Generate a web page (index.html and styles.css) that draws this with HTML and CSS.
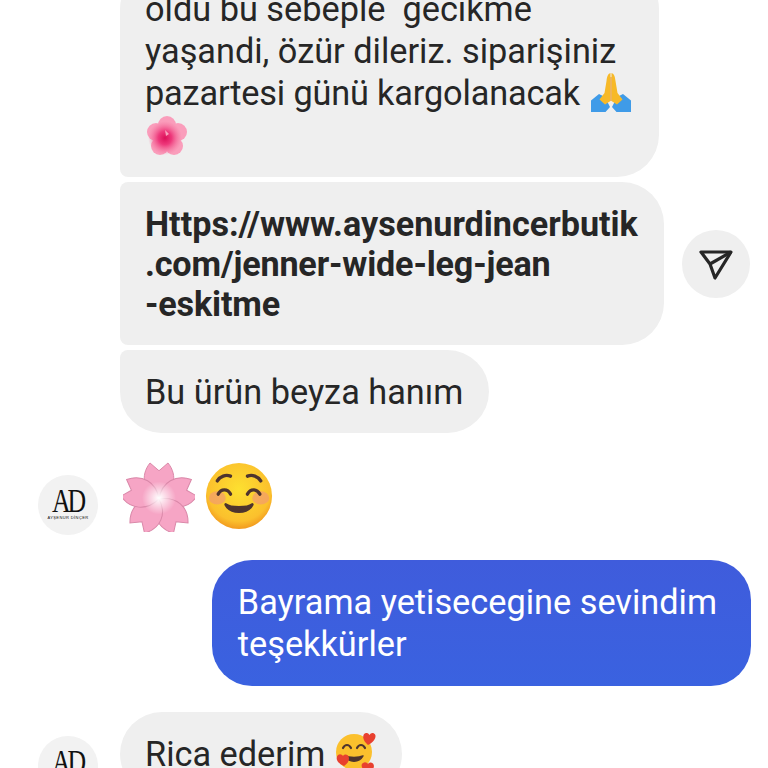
FILE: index.html
```html
<!DOCTYPE html>
<html lang="tr">
<head>
    <meta charset="UTF-8">
    <meta name="viewport" content="width=device-width, initial-scale=1.0">
    <title>Mesajlar</title>
    <link rel="stylesheet" href="styles.css">
</head>
<body>
    <div class="thread">
        <div class="row indent">
            <div class="bubble first">
                oldu bu sebeple&nbsp; gecikme<br>
                yaşandi, özür dileriz. siparişiniz<br>
                <span class="tight">pazartesi günü kargolanacak</span>
                <svg class="emoji pray" viewBox="0 0 40 40" role="img" aria-label="🙏">
                    <path fill="#3f9be8" d="M0 39V27.500L8 21 14 24 19 34 14.500 39ZM40 39V27.500L32 21 26 24 21 34 25.500 39Z"/>
                    <path fill="#f7b928" d="M19.500 0C16.500 1 16 4 15.500 8L13.500 20 8.500 26.500 14 31.500 19.500 28ZM20.500 0C23.500 1 24 4 24.500 8L26.500 20 31.500 26.500 26 31.500 20.500 28Z"/>
                    <path fill="#e9942a" d="M19.500 4H20.500V28H19.500Z"/>
                </svg><br>
                <svg class="emoji flower" viewBox="0 0 40 40" role="img" aria-label="🌺">
                    <defs>
                        <radialGradient id="bloom">
                            <stop offset="0" stop-color="#dc1059"/>
                            <stop offset="0.4" stop-color="#ee3a7c"/>
                            <stop offset="1" stop-color="#f4709c" stop-opacity="0"/>
                        </radialGradient>
                    </defs>
                    <g fill="#fa9dbb">
                        <circle cx="20" cy="9" r="9"/>
                        <circle cx="31" cy="16" r="9"/>
                        <circle cx="27" cy="30" r="9"/>
                        <circle cx="13" cy="30" r="9"/>
                        <circle cx="9" cy="16" r="9"/>
                    </g>
                    <circle cx="18" cy="22" r="17" fill="url(#bloom)"/>
                    <path d="M18 14 22 18 19 20Z" fill="#f8a3bd"/>
                </svg>
            </div>
        </div>

        <div class="row indent center">
            <div class="bubble link">
                Https://www.aysenurdincerbutik<br>
                <span class="tight">.com/jenner-wide-leg-jean</span><br>
                <span class="tight">-eskitme</span>
            </div>
            <button class="share" aria-label="Gönder">
                <svg viewBox="0 0 36 32" width="36" height="32" fill="none" stroke="#262626" stroke-width="3.200" stroke-linejoin="round">
                    <path d="M3 3H33L17 29 12 15Z"/>
                    <path d="M12 15 33 3"/>
                </svg>
            </button>
        </div>

        <div class="row indent">
            <div class="bubble last">Bu ürün beyza hanım</div>
        </div>

        <div class="row with-avatar emoji-row">
            <div class="avatar">
                <span class="mark">AD</span>
                <span class="mark-name">AYŞENUR DİNÇER</span>
            </div>
            <div class="big-emoji">
                <svg class="blossom" viewBox="0 0 72 72" preserveAspectRatio="none" role="img" aria-label="🌸">
                    <defs>
                        <radialGradient id="shine">
                            <stop offset="0" stop-color="#fff"/>
                            <stop offset="1" stop-color="#fff" stop-opacity="0"/>
                        </radialGradient>
                        <path id="petal" d="M36 38C20 30 17 14 27 1L36 9 45 1C55 14 52 30 36 38Z"/>
                    </defs>
                    <g fill="#f6a5c5" stroke="#d987a8" stroke-width="1">
                        <use href="#petal"/>
                        <use href="#petal" transform="rotate(72 36 38)"/>
                        <use href="#petal" transform="rotate(144 36 38)"/>
                        <use href="#petal" transform="rotate(216 36 38)"/>
                        <use href="#petal" transform="rotate(288 36 38)"/>
                    </g>
                    <circle cx="36" cy="37" r="17" fill="url(#shine)"/>
                </svg>
                <svg class="smile" viewBox="0 0 72 72" role="img" aria-label="☺️">
                    <defs>
                        <radialGradient id="face" cx="50%" cy="40%" r="60%">
                            <stop offset="0" stop-color="#fde030"/>
                            <stop offset="0.8" stop-color="#fbc02d"/>
                            <stop offset="1" stop-color="#f29a1f"/>
                        </radialGradient>
                    </defs>
                    <circle cx="36" cy="36" r="35" fill="url(#face)"/>
                    <ellipse cx="13" cy="38" rx="9" ry="7" fill="#f2947a" opacity=".6"/>
                    <ellipse cx="59" cy="38" rx="9" ry="7" fill="#f2947a" opacity=".6"/>
                    <g fill="none" stroke="#4e342e" stroke-width="3.600" stroke-linecap="round">
                        <path d="M13 20C16 15 22 13 27 15"/>
                        <path d="M59 20C56 15 50 13 45 15"/>
                        <path d="M14 34C17 28 24 28 27 34"/>
                        <path d="M45 34C48 28 55 28 58 34"/>
                    </g>
                    <path d="M22 45C27 55 45 55 50 45 45 49 27 49 22 45Z" fill="#4e342e" stroke="#4e342e" stroke-width="3" stroke-linejoin="round"/>
                </svg>
            </div>
        </div>

        <div class="row sent-row">
            <div class="bubble sent">Bayrama yetisecegine sevindim<br>teşekkürler</div>
        </div>

        <div class="row with-avatar reply-row">
            <div class="avatar">
                <span class="mark">AD</span>
                <span class="mark-name">AYŞENUR DİNÇER</span>
            </div>
            <div class="bubble">
                Rica ederim
                <svg class="emoji hug" viewBox="0 0 42 42" role="img" aria-label="🥰">
                    <circle cx="19" cy="21" r="18" fill="#fbc02d"/>
                    <g fill="none" stroke="#4e342e" stroke-width="2.200" stroke-linecap="round">
                        <path d="M8 17C10 13 14 13 16 17"/>
                        <path d="M22 17C24 13 28 13 30 17"/>
                    </g>
                    <path d="M10 25C14 32 24 32 28 25 24 27 14 27 10 25Z" fill="#4e342e" stroke="#4e342e" stroke-width="1.500" stroke-linejoin="round"/>
                    <g fill="#e8402f">
                        <path d="M33 14C27 9 27 3 31 2 33 1.500 34 3 34.500 4 35.500 2.500 37 1.500 39 2.500 42 4 41 10 33 14Z"/>
                        <path d="M9 35C2 32 0 27 3 24 5 22.500 7 23.500 8 25 9 23.500 11 23 13 24.500 15 27 14 32 9 35Z"/>
                        <path d="M33 42C27 39 25 34 28 32 30 30.500 32 31.500 33 33 34 31.500 36 31 38 32.500 40 35 39 39 33 42Z"/>
                    </g>
                </svg>
            </div>
        </div>
    </div>
</body>
</html>
```

FILE: styles.css
```css
html, body {
    height: 100%;
}
body {
    margin: 0;
    background-color: #fff;
    color: #262626;
    font-family: Roboto, "Noto Sans", sans-serif;
    font-size: 34.3px;
    line-height: 42px;
    overflow: hidden;
}
.thread {
    display: flex;
    flex-direction: column;
    margin-top: -33px;
}
.row {
    display: flex;
    align-items: flex-end;
}
.indent {
    padding-left: 120px;
    margin-bottom: 5px;
}
.center {
    align-items: center;
    gap: 18px;
}
.with-avatar {
    padding-left: 38px;
    gap: 22px;
}
.bubble {
    background-color: #efefef;
    border-radius: 42px;
    padding: 21px 26px 21px 25px;
}
.tight {
    letter-spacing: -.16px;
}
.first {
    border-bottom-left-radius: 8px;
}
.link {
    font-size: 34.15px;
    font-weight: 700;
    line-height: 40px;
    padding: 22px 26px 21px 25px;
    border-top-left-radius: 8px;
    border-bottom-left-radius: 8px;
}
.last {
    padding-bottom: 20px;
    border-top-left-radius: 8px;
}
.emoji {
    display: inline-block;
    width: 40px;
    height: 40px;
    vertical-align: -9px;
}
.pray {
    margin: 0 2px 0 3px;
    vertical-align: -8px;
}
.flower {
    margin-left: 2px;
}
.hug {
    width: 42px;
    height: 42px;
    margin: -6px -1px 0 1px;
    vertical-align: -7px;
}
.share {
    display: flex;
    align-items: center;
    justify-content: center;
    width: 68px;
    height: 68px;
    padding: 2px 0 0;
    border: 0;
    border-radius: 50%;
    background-color: #efefef;
}
.avatar {
    display: flex;
    flex-direction: column;
    align-items: center;
    flex-shrink: 0;
    width: 60px;
    height: 60px;
    padding-top: 11px;
    box-sizing: border-box;
    border-radius: 50%;
    background-color: #f2f2f2;
    color: #111;
    font-family: "Liberation Serif", serif;
}
.mark {
    font-size: 34px;
    line-height: 29px;
    letter-spacing: -4px;
    transform: scaleX(.76);
}
.mark-name {
    font-family: "Liberation Sans", sans-serif;
    font-size: 4px;
    line-height: 5px;
    letter-spacing: .4px;
    white-space: nowrap;
}
.emoji-row {
    margin-top: 24px;
}
.big-emoji {
    display: flex;
    align-items: flex-start;
    gap: 10px;
    padding-bottom: 3px;
    margin-left: 3px;
}
.blossom {
    width: 72px;
    height: 70px;
}
.smile {
    width: 68px;
    height: 68px;
}
.sent-row {
    justify-content: flex-end;
    padding-right: 17px;
    margin-top: 25px;
}
.sent {
    background: linear-gradient(#3f5cdc, #3a62e0);
    color: #fff;
    border-radius: 40px;
    padding: 21px 34px 21px 26px;
}
.reply-row {
    margin-top: 26px;
}
```
